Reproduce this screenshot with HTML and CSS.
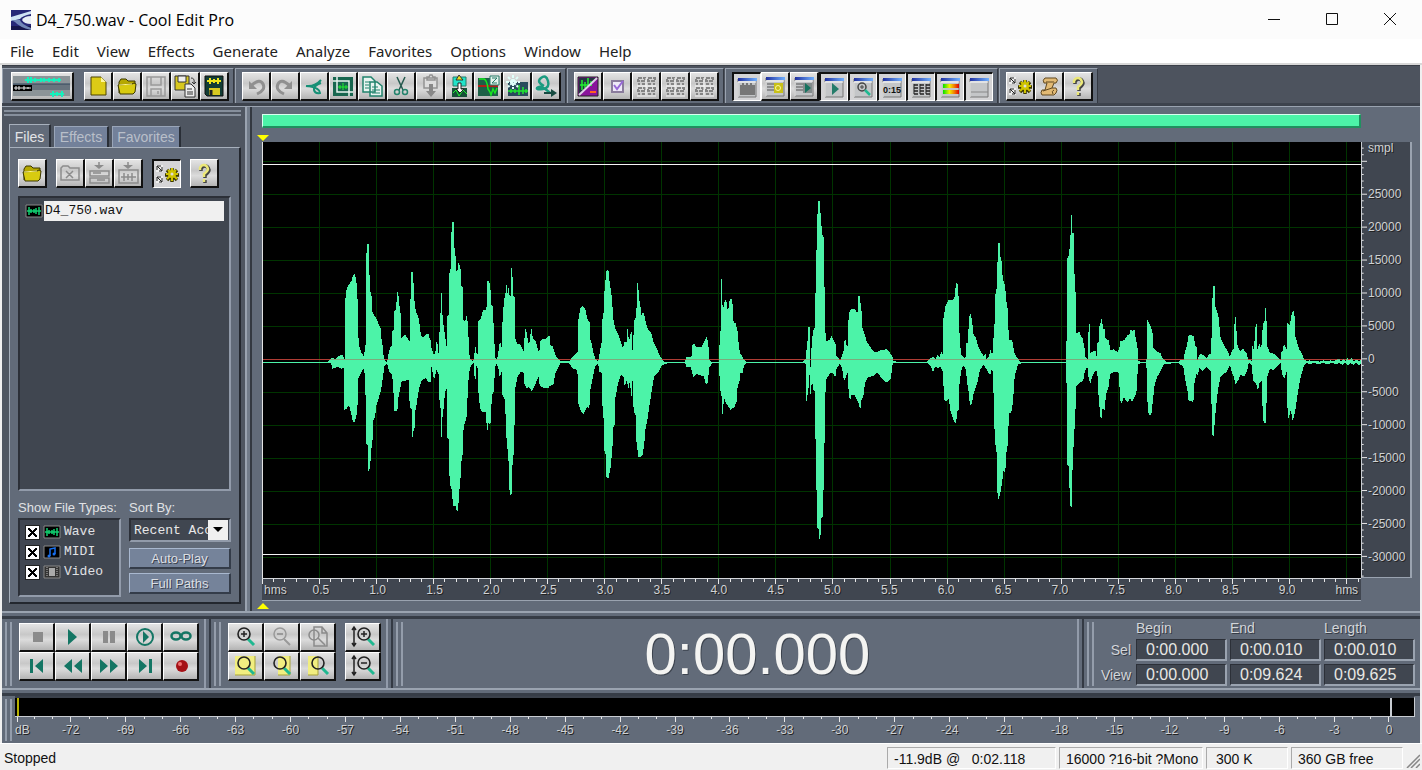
FILE: index.html
```html
<!DOCTYPE html>
<html lang="en">

<head>
    <meta charset="UTF-8">
    <meta name="viewport" content="width=device-width, initial-scale=1.0">
    <title>D4_750.wav - Cool Edit Pro</title>
    <link rel="stylesheet" href="styles.css">
</head>

<body>

    <!-- shared icons -->
    <svg class="sprite" width="0" height="0">
        <defs>
            <linearGradient id="blueBar"><stop offset="0" stop-color="#2030a0"/><stop offset="1" stop-color="#70b0ff"/></linearGradient>
            <linearGradient id="meterBar"><stop offset="0" stop-color="#00e000"/><stop offset=".4" stop-color="#f0f000"/><stop offset=".7" stop-color="#f08000"/><stop offset="1" stop-color="#e00000"/></linearGradient>
        </defs>
        <symbol id="folder" viewBox="0 0 24 24">
            <path d="M4 19V8l2-3h5l2 2h7v3" fill="#b5a800" stroke="#3a3600"/>
            <path d="M5 20l-2-9 14-1 2-1 2 1-1 8-2 2z" fill="#d8cb10" stroke="#3a3600"/>
            <path d="M4 11l13-1" stroke="#fff68a"/>
        </symbol>
        <symbol id="help" viewBox="0 0 24 24">
            <path d="M9 10V8q1-3 4-3t4 4q0 2-4 5v3M13 19v3" fill="none" stroke="#444" stroke-width="3.500"/>
            <path d="M8 9V7q1-3 4-3t4 4q0 2-4 5v3M12 18v3" fill="none" stroke="#ece878" stroke-width="2.500"/>
        </symbol>
        <symbol id="gear" viewBox="0 0 24 24">
            <path d="M1 3h7v7H1zM1 14h7v7H1z" fill="#eee"/>
            <path d="M2 4l5 5M6 4H2v4M7 5v4H4M2 15l5 5M6 15H2v4M7 16v4H4" stroke="#222" fill="none"/>
            <path d="M17 6v14M10 13h14M12 8l10 10M22 8L12 18" stroke="#3c3800" stroke-width="3.500"/>
            <circle cx="17" cy="13" r="4.500" fill="#3c3800"/>
            <path d="M17 6v13M11 12h12M13 8l9 9M21 8l-9 9" stroke="#d0c400" stroke-width="2"/>
            <circle cx="17" cy="12" r="4" fill="#d0c400"/>
            <circle cx="17" cy="12" r="1.500" fill="#ddd"/>
        </symbol>
        <symbol id="win" viewBox="0 0 24 24">
            <path d="M3 4h18v18h-18z" fill="#c4c6c8" stroke="#777"/>
            <path d="M3 3h19v3h-19z" fill="url(#blueBar)"/>
            <path d="M3 22V7h18" fill="none" stroke="#fff"/>
        </symbol>
        <symbol id="words" viewBox="0 0 24 24">
            <path d="M4 4h7v3H4zM14 4h7v3h-7zM4 14h7v3H4zM14 14h7v3h-7z" fill="none" stroke="#858585" stroke-width="2" stroke-dasharray="4 1"/>
            <path d="M4 10h2M8 10h3M14 10h3M19 10h2M4 20h2M8 20h3M14 20h3M19 20h2" stroke="#858585" stroke-width="2"/>
            <path d="M3 12h19M3 22h19M12 4v17" stroke="#f6f6f6"/>
        </symbol>
        <symbol id="lens" viewBox="0 0 24 24">
            <path d="M14 14l6 6" stroke="#20b890" stroke-width="3"/>
            <circle cx="10" cy="9" r="6" fill="none" stroke="#222" stroke-width="1.600"/>
        </symbol>
        <symbol id="wavefile" viewBox="0 0 18 14">
            <path d="M1 1h16v12h-16z" fill="#000" stroke="#888"/>
            <path d="M2 7h14M4 3v8M6 5v4M9 5v4M11 4v6M14 3v8" stroke="#10d070" stroke-width="1.500"/>
        </symbol>
    </svg>

    <header class="titlebar">
        <svg class="logo" viewBox="0 0 20 20">
            <path d="M0 0h20v20H0z" fill="#262878"/>
            <path d="M0 16h20v4H0z" fill="#15164c"/>
            <path d="M0 7L20 1v3Q11 6 9 9L0 11z" fill="#cfe3f5"/>
            <path d="M0 10h9Q10 14 20 18v2Q8 17 4 12z" fill="#7187b8"/>
            <path d="M11 10q2-4 9-4v8q-7 0-9-4z" fill="#e8eef5"/>
        </svg>
        <h1>D4_750.wav - Cool Edit Pro</h1>
        <div class="window-buttons">
            <button aria-label="Minimize"><svg viewBox="0 0 14 14"><path d="M1 8.500h12"/></svg></button>
            <button aria-label="Maximize"><svg viewBox="0 0 14 14"><path d="M1.500 2.500h11v11h-11z"/></svg></button>
            <button aria-label="Close"><svg viewBox="0 0 14 14"><path d="M1 2l12 12M13 2L1 14"/></svg></button>
        </div>
    </header>

    <nav class="menu">
        <a href="#">File</a>
        <a href="#">Edit</a>
        <a href="#">View</a>
        <a href="#">Effects</a>
        <a href="#">Generate</a>
        <a href="#">Analyze</a>
        <a href="#">Favorites</a>
        <a href="#">Options</a>
        <a href="#">Window</a>
        <a href="#">Help</a>
    </nav>

    <div class="frame">

        <div class="toolbar">
            <div class="group">
                <button class="btn wide" aria-label="Multitrack View"><svg viewBox="0 0 60 24">
                    <path d="M1 2h57v20h-57z" fill="#8c9498"/><path d="M1 10h57v6h-57z" fill="#68747e"/><path d="M1 10h57" stroke="#33475c"/>
                    <path d="M1 11h19v6h-19z" fill="#000"/><path d="M2 14h17M4 12v4M7 12v4M12 12v4M16 13v2" stroke="#eee"/>
                    <path d="M13 6h36M16 3v6M19 3v6M23 4v4M29 4v4M32 4v4M37 4v4M42 4v4M47 4v4M38 20h14M41 17v6M45 18v4M50 17v6" stroke="#15f0bc" stroke-width="2"/></svg></button>
                <div class="buttons">
                    <button class="btn" aria-label="New"><svg viewBox="0 0 24 24"><path d="M5 3h10l5 5v13H5z" fill="#dccb16" stroke="#4a4200"/><path d="M15 3v5h5z" fill="#fff79c"/></svg></button>
                    <button class="btn" aria-label="Open"><svg><use href="#folder"/></svg></button>
                    <button class="btn" aria-label="Save"><svg viewBox="0 0 24 24"><path d="M3 3h18v19H3zM7 3v8h10V3M7 22v-7h10v7M14 17v3" fill="none" stroke="#999" stroke-width="1.500"/></svg></button>
                    <button class="btn" aria-label="Save As"><svg viewBox="0 0 24 24"><path d="M2 2h14v14H2z" fill="#d8c820" stroke="#333"/><path d="M5 2h8v6H5z" fill="#eee" stroke="#333"/><path d="M12 10h6l4 4v9H12z" fill="#eee" stroke="#333"/><path d="M14 15h5M14 18h6M14 20h6M18 4q4 0 3 5M19 8l2 2 2-2" fill="none" stroke="#333"/></svg></button>
                    <button class="btn" aria-label="Save Selection"><svg viewBox="0 0 24 24"><path d="M3 2h18v20H5l-2-2z" fill="#123d35" stroke="#111"/><path d="M5 7h14M8 4v6M12 5v4M16 4v6" stroke="#eee41c" stroke-width="2"/><path d="M7 14h11v7H7z" fill="#d8c820"/><path d="M9 16v5" stroke="#222" stroke-width="3"/></svg></button>
                </div>
            </div>
            <div class="group">
                <div class="buttons">
                    <button class="btn" aria-label="Undo"><svg viewBox="0 0 24 24"><path d="M8 11q8-7 11-1t-6 10" fill="none" stroke="#909090" stroke-width="3"/><path d="M5 7v8h8z" fill="#909090"/></svg></button>
                    <button class="btn" aria-label="Redo"><svg viewBox="0 0 24 24"><path d="M16 11q-8-7-11-1t6 10" fill="none" stroke="#909090" stroke-width="3"/><path d="M19 7v8h-8z" fill="#909090"/></svg></button>
                    <button class="btn" aria-label="Repeat Last Command"><svg viewBox="0 0 24 24"><path d="M4 12q9 1 15-6M6 12q12 2 12 7-5 1-6-3t7-7" fill="none" stroke="#169076" stroke-width="2"/></svg></button>
                    <button class="btn" aria-label="Trim"><svg viewBox="0 0 24 24"><path d="M2 3h20v19H2z" fill="#17664f"/><path d="M6 3v15h16M2 7h16v15" fill="none" stroke="#e8f2ef" stroke-width="1.500"/><path d="M7 13h10M9 11v4M12 9v7M15 11v4" stroke="#20f030"/></svg></button>
                    <button class="btn" aria-label="Copy"><svg viewBox="0 0 24 24"><path d="M3 3h8l4 4v11H3zM10 8h7l5 4v10H10z" fill="#e8f4f0" stroke="#21836c" stroke-width="1.500"/><path d="M5 8h5M5 11h4M5 14h4M12 13h6M12 16h8M12 19h8" stroke="#21836c"/></svg></button>
                    <button class="btn" aria-label="Cut"><svg viewBox="0 0 24 24"><path d="M8 3l6 13M16 3l-6 13" stroke="#25594e" stroke-width="1.500"/><circle cx="8" cy="18" r="2.500" fill="none" stroke="#23836c" stroke-width="1.500"/><circle cx="16" cy="18" r="2.500" fill="none" stroke="#23836c" stroke-width="1.500"/></svg></button>
                    <button class="btn" aria-label="Paste"><svg viewBox="0 0 24 24"><path d="M6 4h13v10H6zM9 6V3h2l1-2h2l1 2h2v3z" fill="#ddd" stroke="#929292" stroke-width="1.500"/><path d="M11 10h4v7h3l-5 6-5-6h3z" fill="#888"/></svg></button>
                    <button class="btn" aria-label="Paste to New"><svg viewBox="0 0 24 24"><path d="M6 3h13v9H6z" fill="#20e4ca" stroke="#287b69"/><path d="M9 6l3-5 4 5z" fill="#e8e020" stroke="#333"/><path d="M5 14h15v9H5z" fill="#145037"/><path d="M6 19l3-3 3 6 4-6 4 4" fill="none" stroke="#20f030"/><path d="M11 9h3v6h3l-4 4-4-4h2z" fill="#fff" stroke="#222"/></svg></button>
                    <button class="btn" aria-label="Delete Silence"><svg viewBox="0 0 24 24"><path d="M2 4h20v18H2z" fill="#1d6047"/><path d="M2 12h20" stroke="#b02018" stroke-width="2"/><path d="M3 5h5q3 1 4 10l2 3 1 3 2-6 2 4 2-5" fill="none" stroke="#18e820" stroke-width="1.500"/><path d="M14 2h9v9h-9z" fill="#e4f4ee" stroke="#287b69"/><path d="M16 4h5l-5 5h5" fill="none" stroke="#287b69"/></svg></button>
                    <button class="btn" aria-label="Mix"><svg viewBox="0 0 24 24"><path d="M3 8h20v14H3z" fill="#294a5c"/><path d="M3 17h20M6 15v4M10 15v4M14 11v10M18 13v7M21 15v4" stroke="#20e830" stroke-width="1.500"/><path d="M8 1v14M1 8h14M3 3l10 10M13 3L3 13" stroke="#e0fffa" stroke-width="2" stroke-dasharray="3 1"/></svg></button>
                    <button class="btn" aria-label="Convert"><svg viewBox="0 0 24 24"><path d="M10 12Q2 8 7 4t7 3-5 8-6-1q4-4 13 5" fill="none" stroke="#1b9b80" stroke-width="2.500"/><path d="M10 18h7v-3l6 4-6 4v-3h-7z" fill="#174b41"/></svg></button>
                </div>
            </div>
            <div class="group">
                <div class="buttons">
                    <button class="btn" aria-label="Spectral View"><svg viewBox="0 0 24 24"><path d="M2 3h20v19H2z" fill="#8a149c" stroke="#222"/><path d="M3 4h18L3 21z" fill="#243642"/><path d="M4 11h12M6 6v10M9 8v6M12 4v9M15 7v5" stroke="#20f030" stroke-width="1.500"/><path d="M3 21L21 4" stroke="#ded0e8" stroke-width="2"/><path d="M14 18h6" stroke="#ff6020" stroke-width="2"/></svg></button>
                    <button class="btn" aria-label="Options"><svg viewBox="0 0 24 24"><path d="M7 7h11v11H7z" fill="#eee8f8" stroke="#8a7c9c" stroke-width="2"/><path d="M9 11l3 4 6-8" fill="none" stroke="#9868d8" stroke-width="2"/></svg></button>
                    <button class="btn" aria-label="Cue List"><svg><use href="#words"/></svg></button>
                    <button class="btn" aria-label="Play List"><svg><use href="#words"/></svg></button>
                    <button class="btn" aria-label="Group Properties"><svg><use href="#words"/></svg></button>
                </div>
            </div>
            <div class="group">
                <div class="buttons">
                    <button class="btn pressed" aria-label="Organizer"><svg viewBox="0 0 24 24"><use href="#win"/><path d="M5 20V10h2V8h2v2h2V8h2v2h2V8h2v2h3v10z" fill="#777"/></svg></button>
                    <button class="btn" aria-label="Cue List Window"><svg viewBox="0 0 24 24"><use href="#win"/><path d="M4 10h8M4 13h8M4 16h8" stroke="#555"/><path d="M11 9h9v10h-9z" fill="#c8c018"/><circle cx="15" cy="14" r="2.500" fill="none" stroke="#fff89c"/></svg></button>
                    <button class="btn" aria-label="Play List Window"><svg viewBox="0 0 24 24"><use href="#win"/><path d="M4 10h8M4 13h8M4 16h8" stroke="#555"/><path d="M11 9h9v10h-9z" fill="#838b8b"/><path d="M13 9l6 5-6 5z" fill="#16735f"/></svg></button>
                    <button class="btn pressed" aria-label="Transport"><svg viewBox="0 0 24 24"><use href="#win"/><path d="M10 8l7 6-7 6z" fill="#247c6a"/></svg></button>
                    <button class="btn pressed" aria-label="Zoom"><svg viewBox="0 0 24 24"><use href="#win"/><circle cx="11" cy="12" r="4" fill="none" stroke="#444" stroke-width="1.500"/><path d="M14 15l5 5" stroke="#20b890" stroke-width="2.500"/><path d="M9 12h4M11 10v4" stroke="#444"/></svg></button>
                    <button class="btn pressed" aria-label="Time"><svg viewBox="0 0 24 24"><use href="#win"/><text x="3" y="18" class="mini">0:15</text></svg></button>
                    <button class="btn pressed" aria-label="Sel/View"><svg viewBox="0 0 24 24"><use href="#win"/><path d="M5 10h4M11 10h4M17 10h4M5 13h4M11 13h4M17 13h4M5 16h4M11 16h4M17 16h4M5 19h4M11 19h4M17 19h4" stroke="#222" stroke-width="1.500"/><path d="M5 9v10M11 9v10M17 9v10" stroke="#222"/></svg></button>
                    <button class="btn pressed" aria-label="Level Meters"><svg viewBox="0 0 24 24"><use href="#win"/><path d="M5 9h16v4H5zM5 15h16v4H5z" fill="url(#meterBar)"/></svg></button>
                    <button class="btn pressed" aria-label="Status Bar"><svg viewBox="0 0 24 24"><use href="#win"/><path d="M4 17h17" stroke="#888"/></svg></button>
                </div>
            </div>
            <div class="group">
                <div class="buttons">
                    <button class="btn" aria-label="Settings"><svg><use href="#gear"/></svg></button>
                    <button class="btn" aria-label="Scripts"><svg viewBox="0 0 24 24"><path d="M8 4h11q3 2 0 5h-2l-2 5h4q2 2 0 5l-2 2H5q-2-2 0-5h3l2-7H7q-2-3 1-5z" fill="#e2ba74" stroke="#604820"/><path d="M17 8H9M15 14l-9 3M16 20q-2-3 1-4" fill="none" stroke="#604820"/></svg></button>
                    <button class="btn" aria-label="Help"><svg><use href="#help"/></svg></button>
                </div>
            </div>
        </div>

        <main class="main">
            <aside class="organizer">
                <div class="drag-lines"></div>
                <div class="tabs">
                    <button class="tab active">Files</button>
                    <button class="tab">Effects</button>
                    <button class="tab">Favorites</button>
                </div>
                <div class="panel">
                    <div class="panel-tools">
                        <button class="btn" aria-label="Open File"><svg><use href="#folder"/></svg></button>
                        <div class="buttons">
                            <button class="btn" aria-label="Close File"><svg viewBox="0 0 24 24"><path d="M3 19V7l2-2h5l2 2h9v12zM8 10l7 7M15 10l-7 7" fill="none" stroke="#8c8c8c" stroke-width="1.500"/></svg></button>
                            <button class="btn" aria-label="Insert into Multitrack"><svg viewBox="0 0 24 24"><path d="M3 10h19v5H3zM3 17h19v5H3zM6 12h8M10 19h8M12 1v3" fill="none" stroke="#8c8c8c" stroke-width="1.500"/><path d="M7 4h10l-5 4z" fill="#8c8c8c"/></svg></button>
                            <button class="btn" aria-label="Edit File"><svg viewBox="0 0 24 24"><path d="M3 9h19v13H3zM5 16h15M8 12v8M12 13v6M16 12v8M12 1v3" fill="none" stroke="#8c8c8c" stroke-width="1.500"/><path d="M7 4h10l-5 4z" fill="#8c8c8c"/></svg></button>
                        </div>
                        <button class="btn pressed" aria-label="Advanced Options"><svg><use href="#gear"/></svg></button>
                        <button class="btn" aria-label="Organizer Help"><svg><use href="#help"/></svg></button>
                    </div>
                    <ul class="files">
                        <li><svg class="type-icon"><use href="#wavefile"/></svg><span>D4_750.wav</span></li>
                    </ul>
                    <div class="filters">
                        <div class="filter-types">
                            <p>Show File Types:</p>
                            <div class="types">
                                <label><input type="checkbox" checked><svg class="type-icon"><use href="#wavefile"/></svg>Wave</label>
                                <label><input type="checkbox" checked><svg class="type-icon" viewBox="0 0 18 14"><path d="M1 1h16v12H1z" fill="#000" stroke="#888"/><path d="M7 11V4l5-1v6" fill="none" stroke="#1870f0" stroke-width="1.500"/><circle cx="6" cy="11" r="1.500" fill="#1870f0"/><circle cx="11" cy="9" r="1.500" fill="#1870f0"/></svg>MIDI</label>
                                <label><input type="checkbox" checked><svg class="type-icon" viewBox="0 0 18 14"><path d="M1 1h16v12H1z" fill="#333" stroke="#888"/><path d="M6 3h6v8H6z" fill="#aaa"/><path d="M4 2v10M14 2v10" stroke="#bbb" stroke-dasharray="1 1"/></svg>Video</label>
                            </div>
                        </div>
                        <div class="sorting">
                            <label for="sort">Sort By:</label>
                            <div class="select-box">
                                <select id="sort">
                                    <option>Recent Access</option>
                                    <option>Name</option>
                                </select>
                            </div>
                            <button class="flat">Auto-Play</button>
                            <button class="flat">Full Paths</button>
                        </div>
                    </div>
                </div>
            </aside>

            <div class="splitter"></div>

            <section class="editor">
                <div class="view-range"></div>
                <div class="marker"><svg viewBox="0 0 12 7"><path d="M0 0h12L6 6z" fill="#ffff00"/></svg></div>
                <svg class="wave" viewBox="0 0 3297 1308" preserveAspectRatio="none">
                    <path id="grid" stroke="#003400" fill="none"/>
                    <path d="M0 67H3297M0 1237H3297" stroke="#f4f4f4"/>
                    <path d="M0 652H3297" stroke="#b01818"/>
                    <path class="signal" transform="translate(-21 144)" d="M24 515L220 515 228 506 234 504 240 508 248 500 258 494 264 496 268 508 270 508 270 338 274 300 280 286 290 272 294 256 299 252 304 268 307 328 310 330 310 440 314 475 320 490 326 498 331 476 333 440 333 188 336 188 337 162 341 162 341 225 345 270 347 315 351 320 351 365 360 380 366 390 374 410 378 415 379 442 384 475 386 500 391 512 396 518 400 495 406 470 412 468 412 423 416 420 416 365 424 358 425 320 428 304 432 325 434 356 437 372 438 445 446 436 452 436 460 448 464 455 464 328 468 326 468 245 475 245 476 305 480 348 484 368 490 380 494 405 496 425 500 440 508 440 514 432 520 430 524 445 528 455 530 478 537 495 543 480 544 455 547 455 549 484 553 500 554 370 558 370 558 308 562 308 562 370 566 408 570 436 574 468 577 468 577 378 581 375 581 240 586 260 589 125 591 125 591 95 596 95 597 148 600 198 603 200 604 245 610 235 611 208 615 235 619 240 619 288 623 290 623 385 628 395 633 390 634 375 638 395 640 400 641 480 645 505 652 514 657 510 660 470 663 470 664 490 668 494 670 395 678 385 684 360 692 360 697 345 697 274 703 274 705 295 709 310 709 345 715 352 716 440 720 475 722 512 728 500 734 460 737 460 739 470 742 470 742 405 746 345 750 310 753 308 753 270 757 310 761 292 764 320 768 318 768 226 772 250 775 318 779 322 779 438 786 462 794 462 802 475 808 486 809 408 814 424 820 460 824 455 828 418 831 418 833 445 842 455 848 475 853 490 855 455 864 446 872 448 878 440 884 438 885 464 894 470 898 485 904 502 916 514 944 514 950 502 960 494 970 485 970 390 976 355 984 348 992 360 996 385 1004 398 1004 440 1010 462 1016 492 1022 508 1030 514 1034 490 1040 455 1042 390 1047 362 1048 308 1054 245 1060 238 1063 270 1070 318 1076 395 1080 412 1090 435 1098 458 1104 475 1108 455 1116 455 1117 418 1120 418 1121 460 1128 425 1131 425 1132 480 1135 480 1136 398 1142 382 1146 340 1147 278 1150 278 1151 320 1157 352
                        L1157 800 1150 800 1144 750 1142 675 1136 665 1133 565 1130 622 1124 575 1120 598 1116 570 1109 590 1106 560 1098 555 1088 585 1080 630 1079 705 1075 712 1074 750 1070 800 1066 840 1060 865 1054 860 1054 800 1048 780 1047 700 1042 640 1040 548 1032 545 1030 520 1020 530 1012 570 1006 600 1003 655 996 650 986 672 978 665 970 640 970 570 966 540 952 535 942 518 918 518 912 528 900 552 896 582 884 588 880 596 862 592 854 588 852 560 848 565 838 590 830 604 822 590 816 596 808 580 806 548 798 545 788 560 780 600 779 640 778 790 773 800 771 910 764 920 762 830 757 770 754 740 750 630 742 615 742 550 738 545 735 566 730 535 724 520 719 535 718 600 712 612 709 650 706 708 701 695 699 720 696 720 692 665 684 668 675 655 670 605 668 535 663 524 662 566 659 566 656 520 648 525 642 548 638 610 636 675 632 690 626 710 622 810 618 815 616 880 611 912 610 968 604 958 600 940 597 955 593 935 591 900 585 885 582 830 581 748 577 745 577 592 570 605 566 655 562 685 562 740 558 740 558 655 554 650 552 555 548 550 546 530 544 545 537 568 529 530 527 577 520 575 512 565 500 570 494 590 488 618 486 640 480 665 480 712 476 720 473 745 470 712 470 658 464 650 462 570 450 572 440 575 436 595 430 625 427 664 418 664 418 630 414 595 412 555 404 548 396 520 388 528 384 560 378 600 370 628 364 648 360 680 354 695 352 770 348 775 346 825 342 845 338 838 338 765 333 760 331 560 326 535 318 548 310 565 310 600 308 640 304 680 298 698 292 690 288 668 282 645 276 655 268 660 268 534 258 536 250 530 232 536 228 519 24 519z"/>
                    <path class="signal" transform="translate(1134 144)" d="M0 352L4 375 9 365 14 380 18 400 24 420 34 430 42 460 52 480 60 498 68 510 74 515 136 515 138 500 150 502 157 498 157 465 163 462 168 472 176 470 186 470 192 455 200 440 205 458 207 508 214 515 238 515 239 425 243 422 243 267 247 267 247 345 251 352 255 328 259 332 263 360 267 350 269 328 277 328 278 355 281 398 287 400 291 415 294 430 296 462 300 490 306 498 312 510 320 515 490 515 498 505 501 455 505 450 505 410 509 410 509 530 513 530 514 482 517 440 521 418 525 412 525 312 528 305 528 180 532 178 532 72 535 70 535 32 540 32 540 48 544 102 548 138 551 140 551 290 554 292 554 425 558 430 558 455 568 450 575 438 580 450 587 462 588 496 596 504 600 514 606 495 611 482 614 450 618 452 620 470 624 468 625 395 628 368 633 358 645 358 650 368 655 365 655 318 660 318 662 345 666 375 667 412 675 435 680 455 690 470 700 484 708 488 716 482 730 480 740 477 748 485 757 500 760 512 770 515 862 515 870 506 878 500 886 508 892 496 898 502 905 485 909 495 910 388 916 350 926 330 938 330 944 320 948 280 954 282 957 355 959 450 964 495 974 506 978 500 979 460 985 458 986 385 991 370 996 388 1000 430 1008 445 1014 468 1024 488 1032 500 1036 488 1040 508 1048 498 1050 472 1054 490 1060 490 1061 405 1064 402 1065 318 1071 292 1073 192 1075 158 1079 158 1080 195 1085 215 1088 262 1096 292 1098 335 1102 340 1104 390 1107 450 1112 452
                        L1112 668 1108 670 1104 730 1102 780 1098 788 1096 850 1090 842 1086 880 1080 915 1073 932 1070 790 1065 755 1061 655 1060 555 1056 535 1050 556 1038 535 1030 525 1020 540 1014 570 1008 590 1000 615 996 640 990 648 986 605 981 575 978 540 970 526 964 540 958 585 956 660 952 665 948 702 940 690 932 665 926 625 918 635 911 625 910 545 906 540 900 528 894 535 886 530 879 545 872 530 862 519 770 519 758 520 752 568 738 578 726 565 712 548 700 558 684 562 675 580 670 620 664 630 661 660 654 635 644 616 634 616 631 630 626 620 625 570 622 545 618 560 612 572 606 535 600 520 590 535 586 562 578 548 570 550 558 570 555 645 554 760 551 762 551 900 549 905 548 980 544 985 543 1032 540 1035 537 1058 536 1018 532 1015 532 905 529 900 528 748 525 745 524 602 520 600 519 580 514 585 513 610 510 612 508 535 506 595 503 598 502 634 499 634 498 522 490 519 322 519 312 525 308 548 300 550 298 580 293 585 291 632 284 650 272 660 258 640 251 620 250 672 247 672 245 620 239 590 238 519 216 520 207 535 204 578 197 582 192 560 180 555 170 552 160 560 152 530 139 530 136 519 88 519 80 521 66 525 56 545 42 560 34 610 28 650 22 690 16 720 14 750 8 795 0 800z"/>
                    <path class="signal" transform="translate(2244 144)" d="M0 450L4 450 8 458 12 485 18 500 24 506 30 515 168 515 168 455 172 452 172 205 178 192 180 137 183 135 183 76 187 76 187 128 191 130 192 250 195 255 195 304 198 306 198 430 208 425 213 438 218 445 223 470 226 500 234 508 236 402 239 402 239 490 246 486 256 482 260 500 262 500 262 458 266 455 266 412 271 405 273 388 277 388 278 415 284 418 286 445 297 452 300 480 312 478 322 486 328 475 330 455 344 450 352 435 358 435 362 418 368 422 374 420 378 455 382 460 384 512 392 515 408 515 411 500 412 388 418 400 424 415 429 435 430 475 440 484 452 490 458 506 470 515 505 515 512 510 520 512 524 490 530 470 536 434 544 436 553 440 554 465 561 472 562 510 570 490 580 495 590 504 598 492 604 490 606 325 610 322 610 287 614 287 614 345 620 360 625 375 628 405 632 445 642 465 652 482 660 500 666 480 672 475 674 380 677 380 679 412 682 465 690 485 698 475 706 486 711 490 714 510 726 512 727 465 732 480 736 412 740 402 742 480 748 462 754 475 757 425 761 395 765 393 765 353 768 353 768 393 771 396 772 470 780 488 794 492 808 506 812 510 814 488 820 482 821 458 826 470 831 480 832 398 840 405 844 375 850 362 854 380 855 435 862 460 868 480 876 490 882 508 892 513 900 511 908 514 920 512 930 515 942 511 950 514 962 511 970 514 980 509 988 506 993 514 1000 507 1006 514 1012 503 1017 512 1026 503 1031 514 1040 509 1046 513 1053 510
                        L1053 522 1045 525 1038 518 1030 525 1022 520 1013 525 1005 519 998 525 988 519 980 523 965 518 955 523 940 519 925 522 910 519 900 522 890 519 882 525 874 555 868 580 862 620 857 655 852 680 848 692 842 660 836 688 832 650 830 545 823 566 816 550 812 520 800 530 790 540 780 535 772 560 771 636 768 640 767 700 761 700 757 640 756 570 748 580 744 604 738 580 728 572 727 525 716 519 712 540 702 560 692 555 684 572 676 584 672 560 666 550 660 525 650 545 632 560 624 600 620 630 618 668 614 672 613 742 606 735 604 610 602 545 590 530 578 542 568 535 563 556 560 550 553 580 550 640 546 634 536 634 534 610 528 580 524 560 520 530 505 519 462 522 456 535 442 560 434 585 430 620 424 674 416 674 412 630 411 550 408 519 392 519 384 524 380 600 376 618 366 634 360 625 352 638 342 622 334 640 329 625 328 548 312 545 300 552 296 590 288 612 284 662 278 652 275 686 269 675 268 620 264 610 262 540 254 545 246 560 241 580 236 565 232 530 224 545 220 572 208 578 198 590 197 655 195 660 194 718 191 720 190 838 187 840 186 952 180 945 180 895 177 892 176 828 172 825 172 580 169 578 168 519 40 519 26 522 22 530 14 560 10 620 6 662 0 668z"/>
                    <path d="M0 652H3297" stroke="#b06050" stroke-opacity=".5"/>
                    <path d="M1 0V1308" stroke="#e4e4e4"/>
                </svg>
                <div class="amp-ruler">
                    <svg viewBox="0 0 6 1308" preserveAspectRatio="none"><path id="ampTicks"/></svg>
                    <div class="amp-labels" id="ampLabels"></div>
                </div>
                <div class="time-ruler">
                    <svg viewBox="0 0 9624 6" preserveAspectRatio="none"><path id="timeTicks"/></svg>
                    <div class="time-labels" id="timeLabels"></div>
                </div>
                <div class="marker bottom"><svg viewBox="0 0 12 7"><path d="M0 6h12L6 0z" fill="#ffff00"/></svg></div>
            </section>
        </main>

        <div class="divider"></div>

        <div class="transport">
            <div class="grip"></div>
            <div class="keys five">
                <button class="btn" aria-label="Stop"><svg viewBox="0 0 24 24"><path d="M8 7h10v10H8z" fill="#8b8b8b"/></svg></button>
                <button class="btn" aria-label="Play"><svg viewBox="0 0 24 24"><path d="M7 4l9 8-9 8z" fill="#147664"/></svg></button>
                <button class="btn" aria-label="Pause"><svg viewBox="0 0 24 24"><path d="M6 6h5v12H6zM13 6h5v12h-5z" fill="#8b8b8b"/></svg></button>
                <button class="btn" aria-label="Play to End"><svg viewBox="0 0 24 24"><circle cx="12" cy="12" r="8" fill="none" stroke="#147664" stroke-width="2"/><path d="M10 6l6 6-6 6z" fill="#147664"/></svg></button>
                <button class="btn" aria-label="Play Looped"><svg viewBox="0 0 24 24"><ellipse cx="7" cy="11" rx="4.500" ry="3.500" fill="none" stroke="#147664" stroke-width="2.500"/><ellipse cx="17" cy="11" rx="4.500" ry="3.500" fill="none" stroke="#147664" stroke-width="2.500"/></svg></button>
                <button class="btn" aria-label="Go to Beginning"><svg viewBox="0 0 24 24"><path d="M5 5h3v14H5zM18 5v14l-8-7z" fill="#147664"/></svg></button>
                <button class="btn" aria-label="Rewind"><svg viewBox="0 0 24 24"><path d="M11 5v14l-8-7zM21 5v14l-8-7z" fill="#147664"/></svg></button>
                <button class="btn" aria-label="Fast Forward"><svg viewBox="0 0 24 24"><path d="M3 5l8 7-8 7zM13 5l8 7-8 7z" fill="#147664"/></svg></button>
                <button class="btn" aria-label="Go to End"><svg viewBox="0 0 24 24"><path d="M16 5h3v14h-3zM6 5l8 7-8 7z" fill="#147664"/></svg></button>
                <button class="btn" aria-label="Record"><svg viewBox="0 0 24 24"><circle cx="13" cy="12" r="6" fill="#a51116"/><circle cx="11" cy="10" r="2" fill="#f07070"/></svg></button>
            </div>
            <div class="bar"></div>
            <div class="grip"></div>
            <div class="keys three">
                <button class="btn" aria-label="Zoom In"><svg viewBox="0 0 24 24"><use href="#lens"/><path d="M7 9h6M10 6v6" stroke="#222" stroke-width="1.500"/></svg></button>
                <button class="btn" aria-label="Zoom Out"><svg viewBox="0 0 24 24"><path d="M14 14l6 6M7 9h6" stroke="#999" stroke-width="2"/><circle cx="10" cy="9" r="6" fill="none" stroke="#999" stroke-width="1.500"/></svg></button>
                <button class="btn" aria-label="Zoom Full"><svg viewBox="0 0 24 24"><path d="M8 2h8l5 6v13H8zM16 2v6h5M12 13l7 7" fill="none" stroke="#8b8b8b" stroke-width="1.500"/><circle cx="8" cy="10" r="5" fill="none" stroke="#8b8b8b" stroke-width="1.500"/></svg></button>
                <button class="btn" aria-label="Zoom to Selection"><svg viewBox="0 0 24 24"><path d="M1 2h20v19H1z" fill="#f1ee80"/><path d="M1 21h20V2" fill="none" stroke="#a5a138"/><use href="#lens"/></svg></button>
                <button class="btn" aria-label="Zoom to Right Edge"><svg viewBox="0 0 24 24"><path d="M8 2h12v19H8z" fill="#f1ee80"/><path d="M8 21h12V2" fill="none" stroke="#a5a138"/><use href="#lens"/></svg></button>
                <button class="btn" aria-label="Zoom to Left Edge"><svg viewBox="0 0 24 24"><path d="M2 2h10v19H2z" fill="#f1ee80"/><path d="M2 21h10V2" fill="none" stroke="#a5a138"/><use href="#lens" x="2"/></svg></button>
            </div>
            <div class="keys one">
                <button class="btn" aria-label="Zoom In Vertically"><svg viewBox="0 0 24 24"><path d="M3 3v17M1 5l2-3 2 3M1 18l2 3 2-3" fill="none" stroke="#222" stroke-width="1.500"/><use href="#lens" x="3"/><path d="M10 9h6M13 6v6" stroke="#222" stroke-width="1.500"/></svg></button>
                <button class="btn" aria-label="Zoom Out Vertically"><svg viewBox="0 0 24 24"><path d="M3 3v17M1 5l2-3 2 3M1 18l2 3 2-3" fill="none" stroke="#222" stroke-width="1.500"/><use href="#lens" x="3"/><path d="M10 9h6" stroke="#222" stroke-width="1.500"/></svg></button>
            </div>
            <div class="bar"></div>
            <div class="grip"></div>
            <div class="clock">0:00.000</div>
            <div class="bar"></div>
            <div class="grip"></div>
            <div class="selection">
                <span></span>
                <span>Begin</span>
                <span>End</span>
                <span>Length</span>
                <label for="selBegin">Sel</label>
                <input id="selBegin" type="text" value="0:00.000">
                <input type="text" value="0:00.010" aria-label="Selection end">
                <input type="text" value="0:00.010" aria-label="Selection length">
                <label for="viewBegin">View</label>
                <input id="viewBegin" type="text" value="0:00.000">
                <input type="text" value="0:09.624" aria-label="View end">
                <input type="text" value="0:09.625" aria-label="View length">
            </div>
        </div>

        <div class="divider"></div>

        <div class="levels">
            <div class="grip"></div>
            <div class="meter">
                <div class="meter-bar"><span class="floor"></span><span class="clip"></span></div>
                <svg viewBox="0 0 1398 5" preserveAspectRatio="none"><path id="levelTicks"/></svg>
                <div class="level-labels" id="levelLabels"></div>
            </div>
        </div>
    </div>

    <footer class="status">
        <span class="state">Stopped</span>
        <span class="cell cursor">-11.9dB @ &nbsp; 0:02.118</span>
        <span class="cell format">16000 ?16-bit ?Mono</span>
        <span class="cell size">300 K</span>
        <span class="cell free">360 GB free</span>
        <svg class="resize" viewBox="0 0 14 14"><path d="M1 14L14 1M5 14l9-9M10 14l4-4" stroke="#888" stroke-width="1.500"/></svg>
    </footer>

    <script src="script.js"></script>
</body>

</html>
```
FILE: styles.css
```css
* {
    box-sizing: border-box;
}

body {
    margin: 0;
    height: 100vh;
    display: flex;
    flex-direction: column;
    overflow: hidden;
    background-color: #f0f0f0;
    font-family: "Liberation Sans", Arial, sans-serif;
    font-size: 14px;
}

button {
    font-family: inherit;
    padding: 0;
}

p {
    margin: 0;
}

.sprite {
    position: absolute;
}

/* title and menu */
.titlebar {
    height: 39px;
    display: flex;
    align-items: center;
    padding: 0 3px 0 11px;
    background-color: #fcfcfc;
}

.logo {
    width: 20px;
    height: 20px;
    margin-right: 5px;
}

.titlebar h1 {
    flex: 1;
    margin: 0;
    font-family: "Open Sans", sans-serif;
    font-size: 16px;
    font-weight: normal;
    color: #000;
}

.window-buttons {
    display: flex;
}

.window-buttons button {
    width: 58px;
    height: 38px;
    border: none;
    background: none;
}

.window-buttons svg {
    width: 14px;
    height: 14px;
    fill: none;
    stroke: #111;
}

.menu {
    height: 26px;
    display: flex;
    gap: 18px;
    padding-left: 10px;
    border-bottom: 2px solid #d8d8d8;
    background-color: #fff;
    font-family: "Noto Sans", sans-serif;
    font-size: 15px;
    line-height: 24px;
}

.menu a {
    color: #222;
    text-decoration: none;
}

.frame {
    flex: 1;
    min-height: 0;
    display: flex;
    flex-direction: column;
    margin: 0 2px;
    background-color: #626b79;
}

/* toolbar */
.toolbar {
    height: 41px;
    display: flex;
    gap: 1px;
    padding-top: 2px;
    background-color: #4d535e;
    border-top: 1px solid #3a3f48;
    border-bottom: 3px solid #3d434d;
}

.group {
    display: flex;
    align-items: center;
    gap: 10px;
    padding: 0 4px 0 6px;
    background-color: #626b79;
    border-left: 1px solid #9aa3b0;
    border-top: 1px solid #9aa3b0;
    border-right: 1px solid #343942;
}

.group:first-child {
    padding-left: 8px;
}

.buttons {
    display: flex;
}

.btn {
    width: 29px;
    height: 29px;
    display: flex;
    align-items: center;
    justify-content: center;
    border: 1px solid #fff;
    border-right: 2px solid #111;
    border-bottom: 2px solid #111;
    background: linear-gradient(#e4e4e4, #c8c8c8 40%, #dcdcdc 60%, #b4b4b4);
}

.btn svg {
    width: 24px;
    height: 24px;
    flex: none;
}

.btn.pressed {
    border: 1px solid #fff;
    border-left: 2px solid #111;
    border-top: 2px solid #111;
    background: #d4d4d6;
}

.btn.wide {
    width: 63px;
}

.btn.wide svg {
    width: 60px;
}

.mini {
    font-size: 9px;
    font-weight: bold;
    fill: #111;
}

/* organizer */
.main {
    flex: 1;
    min-height: 0;
    display: flex;
    border-top: 1px solid #9aa3b0;
}

.organizer {
    width: 243px;
    display: flex;
    flex-direction: column;
    padding: 3px 4px 7px 7px;
    background-color: #4f5661;
}

.drag-lines {
    height: 6px;
    margin: 0 0 8px -5px;
    border-top: 2px solid #868f9c;
    border-bottom: 2px solid #868f9c;
}

.tabs {
    display: flex;
    align-items: flex-end;
    gap: 3px;
}

.tab {
    height: 21px;
    width: 55px;
    border: 1px solid #99a5b8;
    border-right: 2px solid #292e36;
    border-bottom: none;
    background-color: #73819a;
    color: #b9bfc9;
    font-size: 14px;
}

.tab:last-child {
    width: 69px;
}

.tab.active {
    width: 42px;
    height: 24px;
    margin-bottom: -1px;
    background-color: #626b79;
    border-color: #a7b0bc #292e36 #a7b0bc #a7b0bc;
    color: #e2e4e7;
}

.panel {
    flex: 1;
    min-height: 0;
    display: flex;
    flex-direction: column;
    padding: 11px 8px 4px;
    background-color: #626b79;
    border: 1px solid #a7b0bc;
    border-right: 2px solid #23272e;
    border-bottom: 2px solid #23272e;
}

.panel-tools {
    display: flex;
    gap: 9px;
    margin-bottom: 8px;
}

.files {
    flex: 1;
    min-height: 0;
    margin: 0 0 9px;
    padding: 3px 5px;
    list-style: none;
    background-color: #404650;
    border: 2px solid #2c3038;
    border-right-color: #929baa;
    border-bottom-color: #929baa;
    font-family: "Liberation Mono", monospace;
    font-size: 13px;
}

.files li {
    display: flex;
    align-items: center;
    gap: 1px;
}

.files span {
    flex: 1;
    height: 20px;
    line-height: 20px;
    padding-left: 1px;
    background-color: #f0f0f0;
    color: #111;
}

.type-icon {
    width: 18px;
    height: 14px;
    flex: none;
}

.filters {
    display: flex;
    gap: 8px;
    color: #e0e2e5;
    font-size: 13px;
    line-height: 16px;
}

.filter-types {
    width: 103px;
    white-space: nowrap;
}

.types {
    height: 79px;
    margin-top: 2px;
    padding: 2px 5px;
    background-color: #404650;
    border: 2px solid #2c3038;
    border-right-color: #929baa;
    border-bottom-color: #929baa;
    font-family: "Liberation Mono", monospace;
}

.types label {
    height: 20px;
    display: flex;
    align-items: center;
    gap: 3px;
}

.types input {
    appearance: none;
    width: 15px;
    height: 15px;
    margin: 0;
    border: 1px solid #222;
    background-color: #fff;
}

.types input:checked {
    background-image:
        linear-gradient(45deg, transparent 42%, #000 42%, #000 58%, transparent 58%),
        linear-gradient(-45deg, transparent 42%, #000 42%, #000 58%, transparent 58%);
    background-size: 9px 9px;
    background-position: center;
    background-repeat: no-repeat;
}

.sorting {
    flex: 1;
    display: flex;
    flex-direction: column;
}

.select-box {
    position: relative;
    height: 24px;
    margin: 2px 0 6px;
    border: 2px solid #2c3038;
    border-right-color: #929baa;
    border-bottom-color: #929baa;
}

.select-box select {
    appearance: none;
    width: 100%;
    height: 20px;
    padding: 0 21px 0 3px;
    border: none;
    border-radius: 0;
    background-color: #404650;
    color: #e8e8e8;
    font-family: "Liberation Mono", monospace;
    font-size: 13px;
    text-overflow: clip;
}

.select-box::after {
    content: "";
    position: absolute;
    right: 1px;
    top: 0;
    width: 20px;
    height: 20px;
    background-color: #f0f0f0;
    pointer-events: none;
}

.select-box::before {
    content: "";
    position: absolute;
    z-index: 1;
    right: 6px;
    top: 7px;
    border: 5px solid transparent;
    border-top-color: #000;
    border-bottom: none;
    pointer-events: none;
}

.flat {
    height: 21px;
    margin-bottom: 4px;
    border: 1px solid #a9b8cf;
    border-right: 2px solid #343c49;
    border-bottom: 2px solid #343c49;
    background-color: #75839a;
    color: #dcdfe4;
    font-size: 13px;
    text-shadow: 1px 1px #3d4450;
}

.splitter {
    width: 7px;
    background-color: #727c8a;
    border-left: 2px solid #9aa3b0;
    border-right: 2px solid #333840;
}

/* waveform editor */
.editor {
    flex: 1;
    min-width: 0;
    display: grid;
    grid-template-columns: 1fr 51px;
    grid-template-rows: 14px 14px minmax(0, 1fr) 23px 10px;
    padding: 7px 8px 0 10px;
}

.view-range {
    background-color: #4cf3a8;
    border: 1px solid #d8fff0;
    border-right: 2px solid #20905f;
    border-bottom: 2px solid #20905f;
}

.marker {
    grid-column: 1;
    display: flex;
    align-items: flex-end;
    margin-left: -5px;
}

.marker svg {
    width: 12px;
    height: 7px;
}

.wave {
    grid-column: 1;
    width: 100%;
    height: 100%;
    min-height: 0;
    background-color: #000;
    stroke-width: 3;
    shape-rendering: crispEdges;
}

.signal {
    fill: #4cf3a8;
}

.amp-ruler {
    min-height: 0;
    display: flex;
    gap: 1px;
    background-color: #404650;
    border-left: 1px solid #c8ccd2;
    border-right: 2px solid #9aa3b0;
    border-bottom: 1px solid #9aa3b0;
}

.amp-ruler svg {
    width: 5px;
    height: 100%;
}

.amp-ruler path,
.time-ruler path,
.meter path {
    fill: none;
    stroke: #e8e8e8;
    stroke-width: 1px;
    vector-effect: non-scaling-stroke;
    shape-rendering: crispEdges;
}

.amp-labels {
    flex: 1;
    display: flex;
    flex-direction: column;
}

.amp-labels,
.time-labels,
.level-labels {
    color: #d0d2d4;
    font-size: 12px;
    line-height: 12px;
    white-space: nowrap;
    text-shadow: 1px 1px #222;
}

.amp-labels span {
    flex: 99 0 0;
    min-height: 0;
    display: flex;
    align-items: center;
}

.amp-labels .unit {
    flex-grow: 108;
    align-items: flex-start;
}

.amp-labels .rest {
    flex-grow: 12;
}

.time-ruler {
    grid-column: 1;
    background-color: #404650;
    border-top: 1px solid #d4d6da;
    border-bottom: 1px solid #9aa3b0;
}

.time-ruler svg {
    display: block;
    width: 100%;
    height: 5px;
}

.time-labels,
.level-labels {
    display: flex;
}

.time-labels span {
    flex: 500 0 0;
    min-width: 0;
    text-align: center;
}

.time-labels .first {
    flex-grow: 250;
    text-align: left;
    padding-left: 2px;
}

.time-labels .last {
    flex-grow: 374;
    text-align: right;
    padding-right: 3px;
}

.marker.bottom {
    align-items: center;
}

/* transport */
.divider {
    height: 8px;
    background-color: #626b79;
    border-top: 2px solid #9aa3b0;
    border-bottom: 3px solid #363c46;
}

.transport {
    height: 69px;
    display: flex;
}

.grip {
    width: 7px;
    margin: 3px 0 2px 3px;
    border-left: 2px solid #949dab;
    border-right: 2px solid #949dab;
}

.bar {
    width: 7px;
    border-left: 2px solid #929baa;
    border-right: 2px solid #343a44;
    margin-left: 5px;
}

.keys {
    display: grid;
    grid-auto-rows: 29px;
    align-content: start;
    padding-top: 4px;
    margin-left: 7px;
}

.keys .btn {
    width: 36px;
}

.five {
    grid-template-columns: repeat(5, 36px);
}

.three {
    grid-template-columns: repeat(3, 36px);
}

.one {
    margin-left: 9px;
}

.clock {
    flex: 1;
    align-self: center;
    padding-left: 40px;
    text-align: center;
    color: #f4f4f2;
    font-size: 58px;
    line-height: 64px;
    text-shadow: 1px 1px #3c434e;
}

.selection {
    display: grid;
    grid-template-columns: 39px 91px 91px 91px;
    grid-template-rows: 17px 22px 22px;
    column-gap: 3px;
    row-gap: 3px;
    padding-right: 5px;
    color: #d2d5d9;
    font-size: 14px;
    line-height: 18px;
    text-shadow: 1px 1px #363c46;
}

.selection label {
    padding-right: 2px;
    text-align: right;
    line-height: 22px;
}

.selection input {
    min-width: 0;
    padding: 0 0 0 9px;
    border: 1px solid #2c3038;
    border-right: 2px solid #9aa3b0;
    border-bottom: 2px solid #9aa3b0;
    background-color: #404650;
    color: #e8e8e4;
    font-family: inherit;
    font-size: 16px;
}

/* level meters */
.levels {
    height: 47px;
    display: flex;
}

.levels .grip {
    margin-right: 3px;
}

.meter {
    flex: 1;
    min-width: 0;
    padding-right: 5px;
}

.meter-bar {
    height: 21px;
    display: flex;
    justify-content: space-between;
    padding-left: 2px;
    background-color: #000;
    border-top: 2px solid #3b414b;
    border-right: 1px solid #c8ccd2;
    border-bottom: 1px solid #c8ccd2;
}

.floor {
    width: 2px;
    background-color: #b5b000;
}

.clip {
    width: 24px;
    border-left: 2px solid #c8ccd2;
}

.meter svg {
    display: block;
    width: 100%;
    height: 5px;
}

.level-labels {
    padding-top: 2px;
}

.level-labels span {
    flex: 5483 0 0;
    min-width: 0;
    padding-left: 3px;
    text-align: center;
}

.level-labels .first {
    flex-grow: 2820;
    padding-left: 0;
    text-align: left;
}

/* status bar */
.status {
    height: 27px;
    display: flex;
    align-items: flex-start;
    gap: 3px;
    padding: 3px 2px 2px 4px;
    background-color: #f0f0f0;
    border-top: 1px solid #fff;
    color: #111;
    line-height: 22px;
}

.state {
    flex: 1;
}

.cell {
    height: 22px;
    padding-left: 6px;
    border: 1px solid #aaa;
    border-right-color: #fff;
    border-bottom-color: #fff;
    white-space: nowrap;
}

.cursor {
    width: 169px;
}

.format {
    width: 144px;
}

.size {
    width: 82px;
    padding-left: 9px;
}

.free {
    width: 112px;
}

.resize {
    width: 14px;
    height: 14px;
    align-self: flex-end;
}
```
FILE: script.js
```js
function addLabel(box, text, className) {
    const span = document.createElement('span');
    span.textContent = text;
    if (className) span.className = className;
    box.appendChild(span);
}

// time ruler, 9.624 seconds wide
let ticks = '';
let grid = '';
for (let i = 0; i <= 96; i++) {
    ticks += `M${i * 100} 0v${i % 5 === 0 ? 6 : 3}`;
    if (i % 5 === 0 && i > 0) grid += `M${i / 96.24 * 3297} 0V1308`;
}
document.getElementById('timeTicks').setAttribute('d', ticks);

const timeLabels = document.getElementById('timeLabels');
addLabel(timeLabels, 'hms', 'first');
for (let t = 1; t <= 18; t++) addLabel(timeLabels, (t / 2).toFixed(1));
addLabel(timeLabels, 'hms', 'last');

// amplitude ruler
ticks = '';
for (let s = -33; s <= 33; s++) {
    ticks += `M0 ${652 - s * 19.8}h${s % 5 === 0 ? 6 : 2}`;
    if (s % 5 === 0 && s !== 0) grid += `M0 ${652 - s * 19.8}H3297`;
}
document.getElementById('ampTicks').setAttribute('d', ticks);
document.getElementById('grid').setAttribute('d', grid);

const ampLabels = document.getElementById('ampLabels');
addLabel(ampLabels, 'smpl', 'unit');
for (let v = 25000; v >= -30000; v -= 5000) addLabel(ampLabels, v);
addLabel(ampLabels, '', 'rest');

// level meter, 3 dB per label
ticks = 'M2 0v5';
for (let db = 0; db <= 74; db++) ticks += `M${1372 - db * 18.28} 0v${db % 3 === 0 ? 5 : 2}`;
document.getElementById('levelTicks').setAttribute('d', ticks);

const levelLabels = document.getElementById('levelLabels');
addLabel(levelLabels, 'dB', 'first');
for (let db = -72; db <= 0; db += 3) addLabel(levelLabels, db);
```
